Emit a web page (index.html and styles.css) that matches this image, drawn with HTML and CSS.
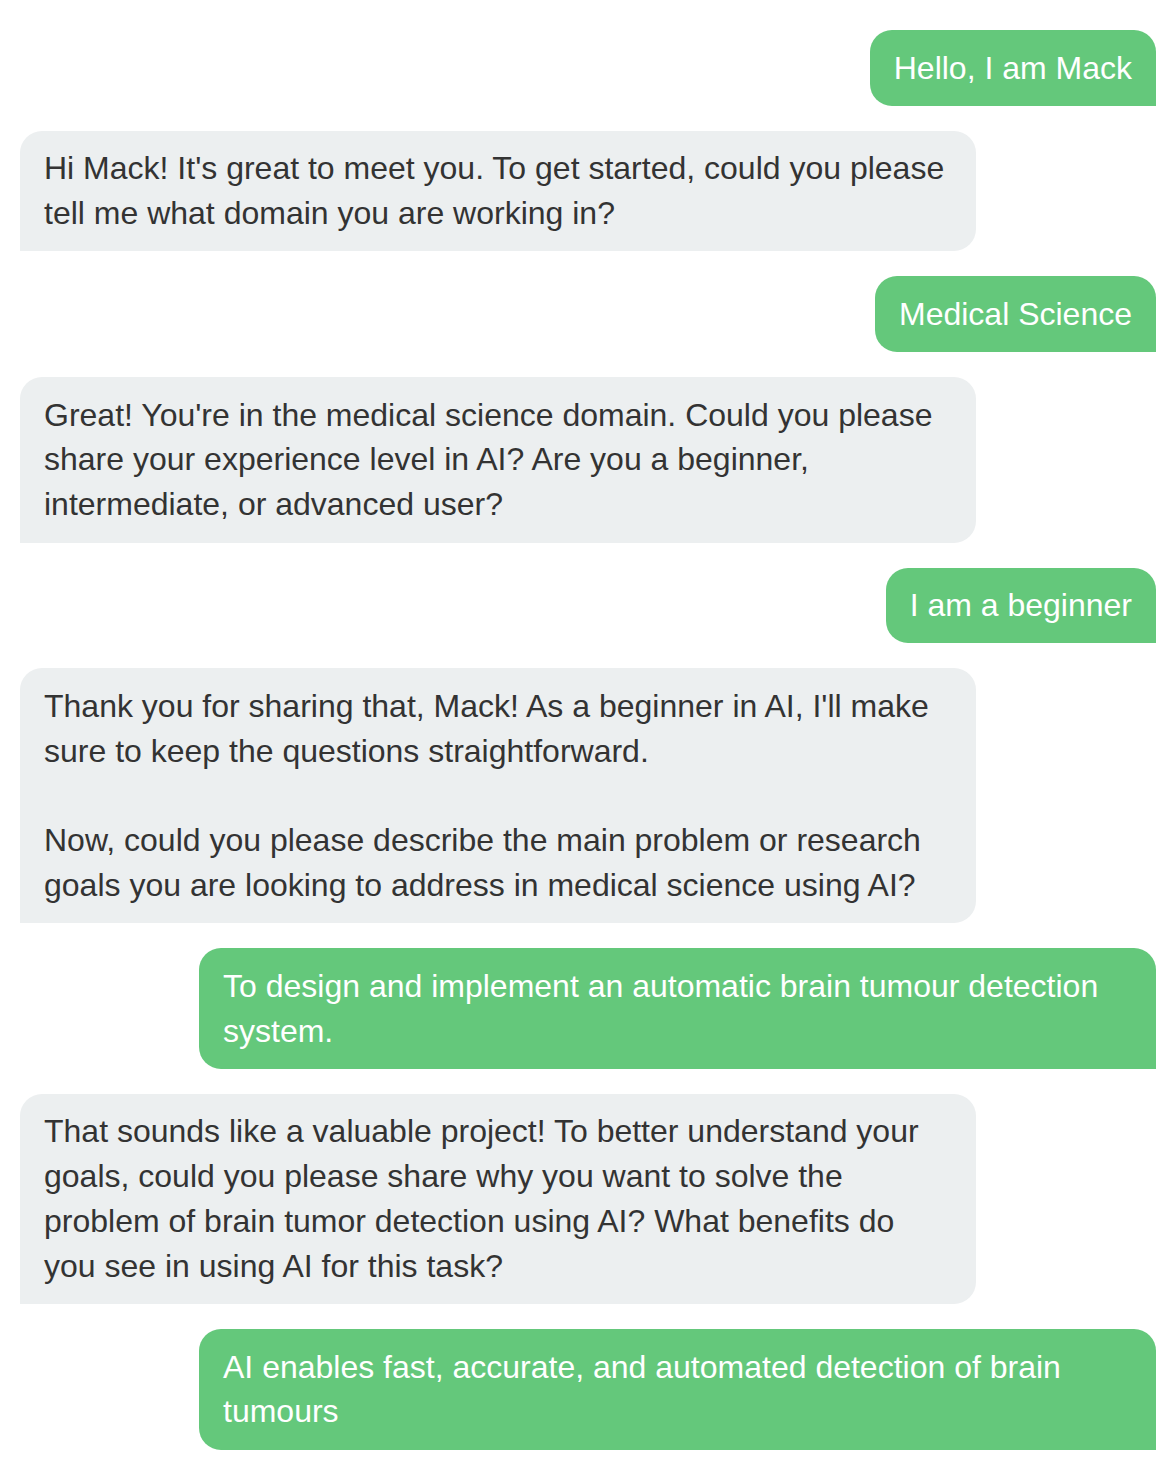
FILE: index.html
```html
<!DOCTYPE html>
<html lang="en">
<head>
<meta charset="utf-8">
<title>Chat</title>
<link rel="stylesheet" href="styles.css">
</head>
<body>
<div class="chat">
  <div class="msg user">Hello, I am Mack</div>
  <div class="msg bot">Hi Mack! It's great to meet you. To get started, could you please<br>tell me what domain you are working in?</div>
  <div class="msg user">Medical Science</div>
  <div class="msg bot">Great! You're in the medical science domain. Could you please<br>share your experience level in AI? Are you a beginner,<br>intermediate, or advanced user?</div>
  <div class="msg user">I am a beginner</div>
  <div class="msg bot">Thank you for sharing that, Mack! As a beginner in AI, I'll make<br>sure to keep the questions straightforward.<br><br>Now, could you please describe the main problem or research<br>goals you are looking to address in medical science using AI?</div>
  <div class="msg user wide">To design and implement an automatic brain tumour detection<br>system.</div>
  <div class="msg bot">That sounds like a valuable project! To better understand your<br>goals, could you please share why you want to solve the<br>problem of brain tumor detection using AI? What benefits do<br>you see in using AI for this task?</div>
  <div class="msg user wide">AI enables fast, accurate, and automated detection of brain<br>tumours</div>
</div>
</body>
</html>
```

FILE: styles.css
```css
html, body {
  margin: 0;
  padding: 0;
  background: #ffffff;
}

body {
  font-family: "Liberation Sans", Arial, Helvetica, sans-serif;
  font-size: 32px;
  line-height: 1.4;
}

.chat {
  display: flex;
  flex-direction: column;
  align-items: flex-start;
  gap: 25px;
  padding: 30px 14px 16px 20px;
}

.msg {
  box-sizing: border-box;
  max-width: 957px;
  padding: 15.5px 24px;
}

.user {
  align-self: flex-end;
  background: #64c87b;
  color: #ffffff;
  border-radius: 22px 22px 0 22px;
}

.user.wide {
  width: 957px;
}

.bot {
  width: 956px;
  background: #eceff0;
  color: #333333;
  border-radius: 22px 22px 22px 0;
}
```
